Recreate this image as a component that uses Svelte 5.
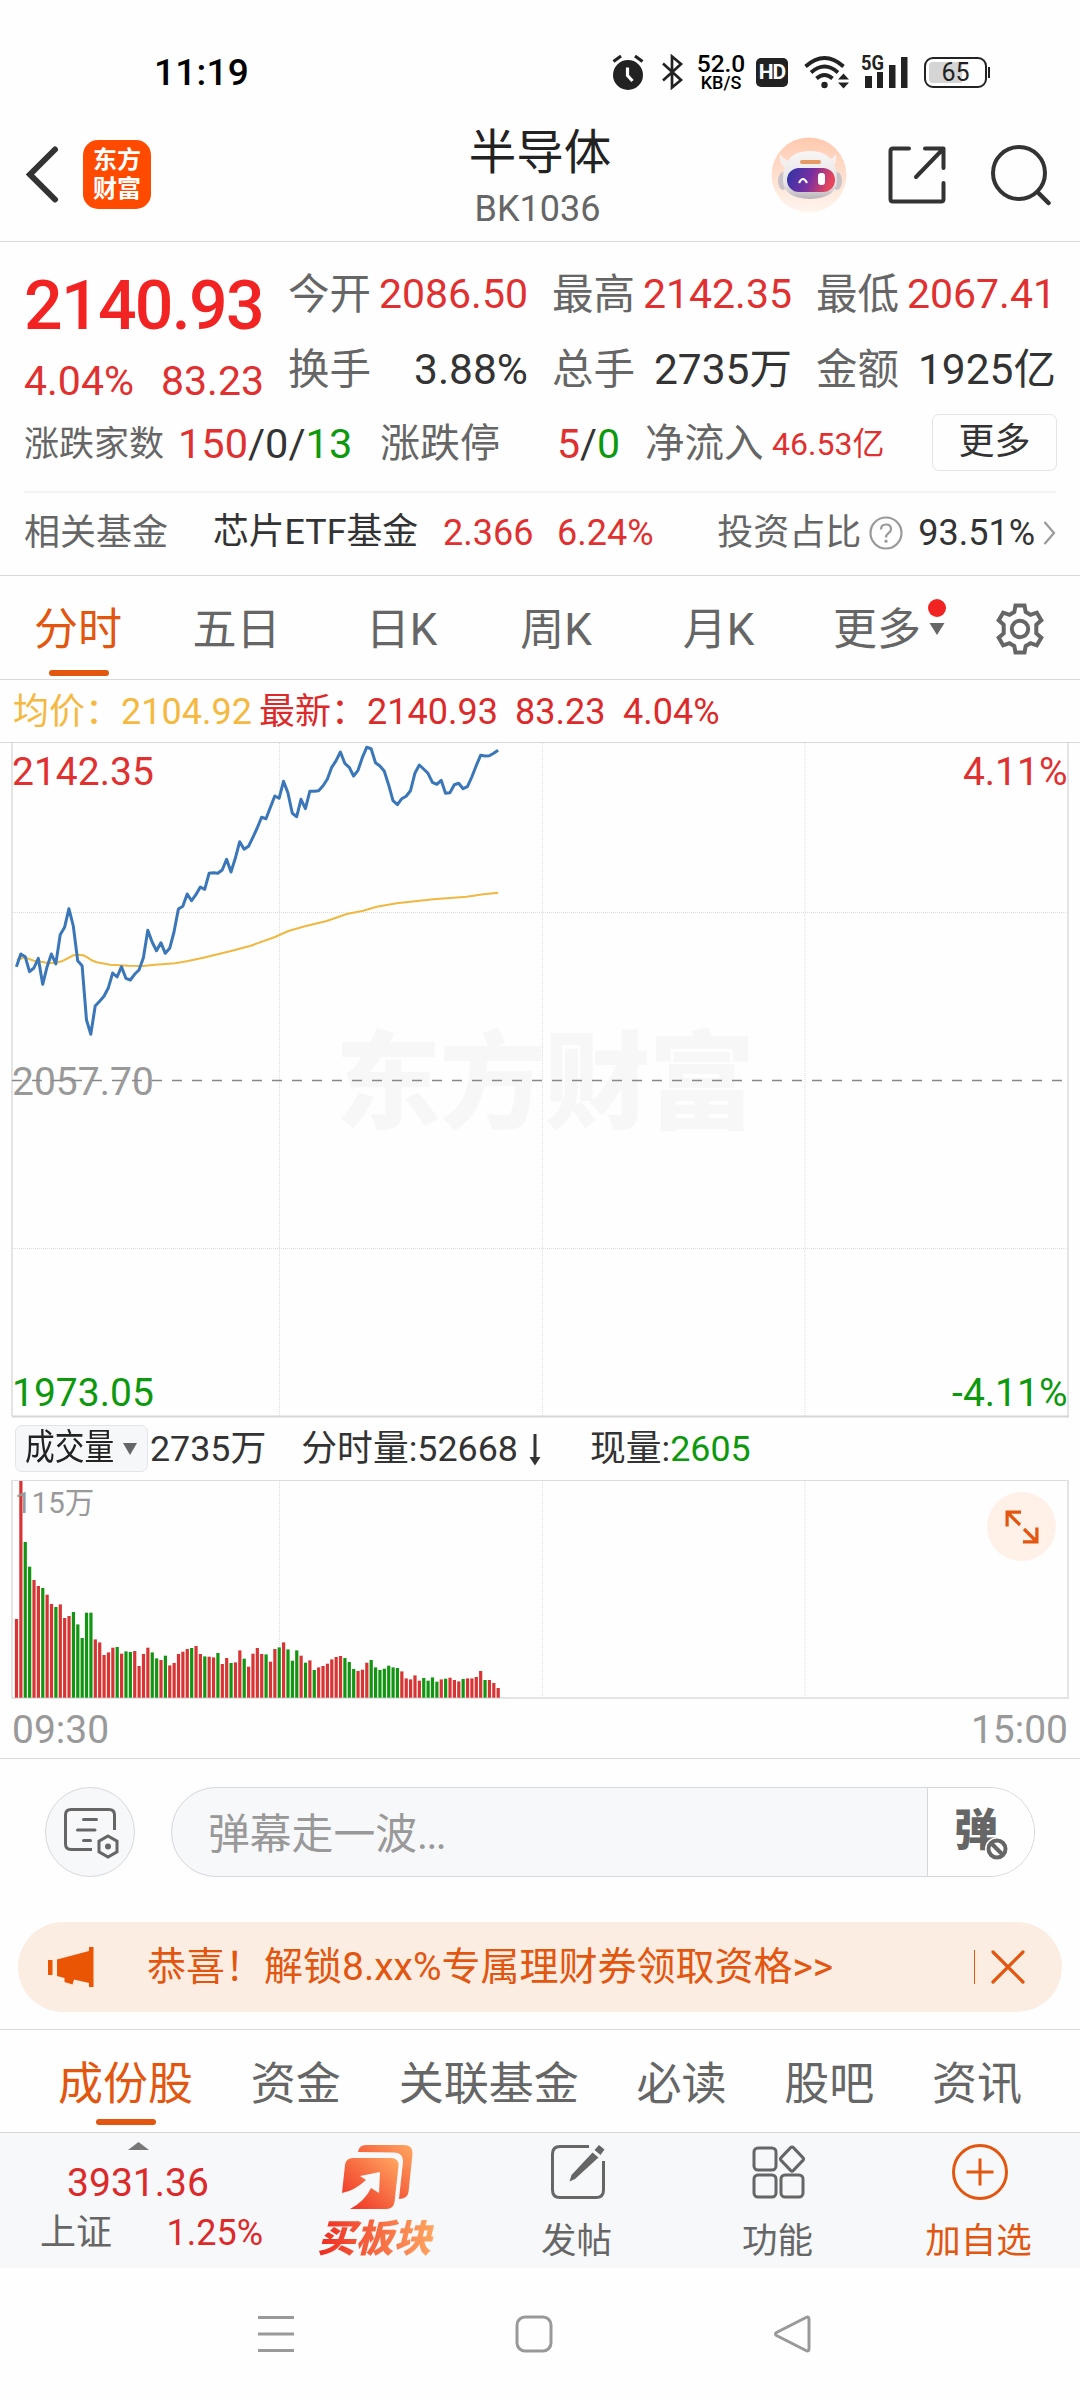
<script>
	const quotes = [
		{ label: '今开', value: '2086.50', tone: 'up' },
		{ label: '最高', value: '2142.35', tone: 'up' },
		{ label: '最低', value: '2067.41', tone: 'up' },
		{ label: '换手', value: '3.88%', tone: 'flat' },
		{ label: '总手', value: '2735万', tone: 'flat' },
		{ label: '金额', value: '1925亿', tone: 'flat' }
	];

	const periods = ['分时', '五日', '日K', '周K', '月K'];
	const sections = ['成份股', '资金', '关联基金', '必读', '股吧', '资讯'];

	let activePeriod = 0;
	let activeSection = 0;

	// one sample per minute, three units per pixel
	const step = 4.379;
	const prices = [
		710, 672, 680, 725, 714, 685, 763, 710, 672, 702, 614, 592, 536, 588, 692, 707, 870, 913, 828, 814,
		799, 773, 729, 741, 710, 745, 750, 733, 720, 683, 601, 636, 662, 638, 670, 655, 606, 537, 529, 492,
		512, 494, 471, 478, 430, 428, 430, 420, 388, 426, 385, 335, 358, 349, 322, 294, 262, 266, 232, 198,
		205, 154, 188, 250, 260, 208, 236, 184, 184, 182, 168, 148, 112, 92, 66, 100, 112, 138, 121, 83,
		52, 56, 98, 108, 123, 164, 212, 224, 206, 199, 182, 130, 105, 117, 130, 157, 163, 151, 190, 188,
		164, 160, 176, 170, 141, 107, 76, 78, 77, 70, 61
	];
	const averages = [
		[50, 690], [62, 686], [75, 682], [89, 688], [102, 692], [115, 694], [140, 698], [165, 699], [185, 694],
		[205, 684], [220, 676], [235, 674], [250, 676], [262, 682], [275, 691], [290, 697], [330, 704], [385, 707],
		[430, 708], [465, 704], [525, 700], [560, 694], [610, 683], [690, 664], [750, 648], [825, 621], [865, 603],
		[915, 589], [980, 573], [1040, 552], [1090, 542], [1130, 530], [1190, 520], [1300, 508], [1400, 500],
		[1450, 493], [1495, 488]
	];
	const priceLine = prices.map((v, i) => `${(16.4 + i * step).toFixed(1)},${(v / 3 - 12).toFixed(1)}`).join(' ');
	const averageLine = averages.map(([x, v]) => `${(x / 3).toFixed(1)},${(v / 3 - 12).toFixed(1)}`).join(' ');

	const volumes = [
		236, 650, 467, 393, 353, 335, 329, 309, 281, 272, 280, 239, 245, 257, 220, 179, 255, 255, 175, 166,
		128, 136, 150, 152, 132, 139, 137, 140, 95, 131, 150, 136, 118, 113, 126, 97, 104, 131, 138, 146,
		149, 155, 131, 124, 123, 121, 134, 101, 119, 104, 106, 142, 117, 93, 132, 149, 131, 130, 108, 146,
		151, 166, 145, 111, 142, 126, 105, 112, 83, 91, 95, 102, 115, 122, 125, 119, 107, 86, 80, 84,
		105, 113, 91, 83, 87, 96, 91, 89, 79, 58, 55, 67, 51, 59, 51, 61, 48, 55, 57, 60,
		53, 49, 56, 58, 58, 62, 80, 53, 53, 44, 29
	];
	const sides =
		'RRGGRRGRRGRRRGGGGGRRRRRGRGGRRRRGGRGRRRRRGRRGRRGRRGRRGRRRRGRRGRGGGRGRGRRRRRRGGGRRRGGGGGGGRRRRRGGGGRGRRRGRRRRGRRR';

	const columns = [279.5, 542.5, 805];
</script>

<div class="screen">
	<div class="status">
		<span class="clock">11:19</span>
		<svg class="alarm" width="32" height="36" viewBox="0 0 32 36">
			<circle cx="16" cy="21" r="15" fill="#222" />
			<path d="M1.5 7.5 9 2M30.500 7.500 23 2" stroke="#222" stroke-width="3.200" fill="none" />
			<path d="M15.500 13.500v8l5 5.500" stroke="#fff" stroke-width="3.200" fill="none" />
		</svg>
		<svg class="bluetooth" width="24" height="36" viewBox="0 0 24 36">
			<path d="M2 9.500 20 26l-9 7.500V2.500l9 7.500L2 26.500" fill="none" stroke="#222" stroke-width="2.700" />
		</svg>
		<span class="speed"><b>52.0</b><i>KB/S</i></span>
		<span class="hd">HD</span>
		<svg class="wifi" width="44" height="36" viewBox="0 0 44 36">
			<g fill="none" stroke="#222" stroke-width="3.800">
				<path d="M1.500 12.500q19-17 38 0" />
				<path d="M7 18.500q13.500-12 27 0" />
				<path d="M12.500 24.500q8-7 16 0" />
			</g>
			<circle cx="20.500" cy="31" r="3.200" fill="#222" />
			<path d="M34 25.500h11l-5.500-6zM34 28.500h11l-5.500 6z" fill="#222" />
		</svg>
		<svg class="signal" width="48" height="44" viewBox="0 -4 48 44">
			<text x="0" y="16" textLength="23" lengthAdjust="spacingAndGlyphs">5G</text>
			<path d="M4 22h7v12H4zM16 18h6v16h-6zM28 11h6.500v23H28zM40 3h6.500v31H40z" fill="#222" />
		</svg>
		<span class="battery">65</span>
	</div>

	<header>
		<div class="brand">
			<svg width="33" height="57" viewBox="0 0 33 57">
				<path d="M29 3.500 4 28.500 29 53.500" fill="none" stroke="#333" stroke-width="6" stroke-linecap="round" />
			</svg>
			<div class="logo"><span>东方</span><span>财富</span></div>
		</div>
		<div class="title">
			<h1>半导体</h1>
			<p>BK1036</p>
		</div>
		<div class="actions">
			<svg width="76" height="76" viewBox="0 0 76 76">
				<defs>
					<linearGradient id="halo" x1="0" y1="0" x2="0" y2="1">
						<stop offset="0" stop-color="#ffc9ae" />
						<stop offset="1" stop-color="#fff5ef" />
					</linearGradient>
					<linearGradient id="visor" x1="0" y1="0" x2="1" y2="0.200">
						<stop offset="0" stop-color="#2b35a8" />
						<stop offset="0.550" stop-color="#7a2fa0" />
						<stop offset="1" stop-color="#e8465a" />
					</linearGradient>
					<linearGradient id="helmet" x1="0" y1="0" x2="0" y2="1">
						<stop offset="0" stop-color="#f8f5f5" />
						<stop offset="0.700" stop-color="#e6e3e6" />
						<stop offset="1" stop-color="#b9b3b8" />
					</linearGradient>
				</defs>
				<circle cx="38" cy="38" r="37.500" fill="url(#halo)" />
				<path d="M9 17q-2 12 8 15l5-7q-8-1-13-8zM65 17q2 12-8 15l-5-7q8-1 13-8z" fill="#f6eeee" />
				<ellipse cx="12" cy="44" rx="5" ry="9" fill="#c9c3c8" />
				<ellipse cx="66" cy="44" rx="5" ry="9" fill="#c9c3c8" />
				<path d="M12 43q0-29 27-29t27 29q0 18-27 19-27-1-27-19z" fill="url(#helmet)" />
				<rect x="29" y="23" width="21" height="4" rx="2" fill="#e79a63" />
				<rect x="16" y="31" width="48" height="24" rx="12" fill="url(#visor)" />
				<path d="M28 46q4-8 8 0" fill="none" stroke="#fff" stroke-width="2.200" />
				<rect x="47" y="36" width="7" height="12" rx="3" fill="#fff" />
			</svg>
			<svg class="share" width="60" height="60" viewBox="0 0 60 60">
				<path
					d="M22 3.500H6q-2.500 0-2.500 2.500v48q0 2.500 2.500 2.500h48q2.500 0 2.500-2.500V38M38 3.500h18.500V23M56 4 29 32"
					fill="none" stroke="#333" stroke-width="4" stroke-linecap="round" stroke-linejoin="round" />
			</svg>
			<svg class="search" width="62" height="62" viewBox="0 0 62 62">
				<circle cx="29" cy="29" r="26" fill="none" stroke="#333" stroke-width="4" />
				<path d="M47.500 48 58.500 59" stroke="#333" stroke-width="4.500" stroke-linecap="round" />
			</svg>
		</div>
	</header>

	<section class="summary">
		<div class="top">
			<div class="price">
				<strong>2140.93</strong>
				<p><span>4.04%</span><span>83.23</span></p>
			</div>
			<dl>
				{#each quotes as quote}
					<div>
						<dt>{quote.label}</dt>
						<dd class={quote.tone}>{quote.value}</dd>
					</div>
				{/each}
			</dl>
		</div>
		<div class="breadth">
			<span class="label small">涨跌家数</span>
			<span class="rise"><em class="up">150</em>/0/<em class="down">13</em></span>
			<span class="label">涨跌停</span>
			<span class="limit"><em class="up">5</em>/<em class="down">0</em></span>
			<span class="label inflow">净流入</span>
			<span class="up amount">46.53亿</span>
			<button>更多</button>
		</div>
		<div class="fund">
			<span class="label">相关基金</span>
			<span class="name">芯片ETF基金</span>
			<span class="up nav">2.366</span>
			<span class="up">6.24%</span>
			<span class="label share-of">投资占比</span>
			<svg width="34" height="34" viewBox="0 0 34 34">
				<circle cx="17" cy="17" r="15.500" fill="none" stroke="#999" stroke-width="2.200" />
				<path d="M12 13.500q0-5 5-5t5 4.500q0 2.500-2.500 4.200Q17 19 17 21.500" fill="none" stroke="#999" stroke-width="2.200" />
				<circle cx="17" cy="25.200" r="1.600" fill="#999" />
			</svg>
			<span class="ratio">93.51%</span>
			<svg class="arrow" width="13" height="26" viewBox="0 0 13 26">
				<path d="m1.500 2 9.500 11-9.500 11" fill="none" stroke="#999" stroke-width="2.200" />
			</svg>
		</div>
	</section>

	<nav class="periods">
		{#each periods as period, i}
			<a href="#{i}" class:active={i === activePeriod} on:click|preventDefault={() => (activePeriod = i)}>{period}</a>
		{/each}
		<span class="more">更多
			<svg width="20" height="40" viewBox="0 0 20 40">
				<circle cx="10" cy="10" r="9" fill="#f22323" />
				<path d="M2.500 25h15L10 37z" fill="#666" />
			</svg>
		</span>
		<svg class="gear" width="54" height="54" viewBox="0 0 54 54" fill="none" stroke="#666" stroke-width="4">
			<path
				d="M22.500 3.500h9l1.200 6.500 4.800 2.800 6.300-2.200 4.500 7.800-5 4.200v8.800l5 4.200-4.500 7.800-6.300-2.200-4.800 2.800-1.200 6.500h-9l-1.200-6.500-4.800-2.800-6.300 2.200-4.500-7.800 5-4.200v-8.800l-5-4.200 4.500-7.800 6.300 2.200 4.800-2.800z" />
			<circle cx="27" cy="27" r="8.200" />
		</svg>
	</nav>

	<div class="latest">
		<span class="avg">均价：2104.92</span>
		<span class="now">最新：2140.93</span>
		<span>83.23</span>
		<span>4.04%</span>
	</div>

	<svg class="chart" width="1080" height="676" viewBox="0 0 1080 676">
		<text class="watermark" x="335" y="378" textLength="420">东方财富</text>
		<g class="grid">
			{#each columns as x}
				<path d="M{x} 1V674" />
			{/each}
			<path d="M13 170.500H1067M13 506.500H1067" />
		</g>
		<path d="M0 .5H1080" stroke="#d9d9d9" />
		<path d="M12 1V674M1068 1V674" stroke="#e4e4e4" stroke-width="2" />
		<path d="M12 674.500H1069" stroke="#d6d6d6" stroke-width="2" />
		<text x="12" y="43" class="up">2142.35</text>
		<text x="1067.500" y="43" class="up end">4.11%</text>
		<text x="12" y="353" class="mid">2057.70</text>
		<text x="12" y="664" class="down">1973.05</text>
		<text x="1067.500" y="664" class="down end">-4.11%</text>
		<path d="M12 338.500H1067" stroke="#888" stroke-width="1.700" stroke-dasharray="10 10" />
		<polyline points={averageLine} fill="none" stroke="#f0b840" stroke-width="2" />
		<polyline points={priceLine} fill="none" stroke="#3a76b8" stroke-width="3" stroke-linejoin="round" />
	</svg>

	<div class="volume-bar">
		<button><span>成交量</span><i></i></button>
		<span>2735万</span>
		<span class="minute">分时量:52668</span>
		<svg width="12" height="32" viewBox="0 0 12 32">
			<path d="M6 0v28" stroke="#333" stroke-width="3" />
			<path d="M.5 23h11L6 31.500z" fill="#333" />
		</svg>
		<span class="current">现量:<em class="down">2605</em></span>
	</div>

	<div class="volume">
		<svg class="chart" width="1080" height="220" viewBox="0 0 1080 220">
			<g class="grid">
				{#each columns as x}
					<path d="M{x} 1V217" />
				{/each}
			</g>
			<path d="M12 .5H1069" stroke="#ddd" />
			<path d="M12 0V219M1068 0V219M11 218H1069" stroke="#e4e4e4" stroke-width="2" />
			{#each volumes as v, i}
				<rect
					x={(14.9 + i * step).toFixed(2)} y={(217.700 - v / 3).toFixed(1)}
					width="3.200" height={(v / 3).toFixed(1)}
					fill={sides[i] === 'R' ? '#d93434' : '#129612'} />
			{/each}
			<text x="15" y="33" class="scale">115万</text>
		</svg>
		<button aria-label="全屏">
			<svg width="36" height="36" viewBox="0 0 36 36" fill="none" stroke="#e2560f" stroke-width="3.200">
				<path d="M17 3.100H3.100V17.500M3.500 3.500 16 16M19 32.900H32.900V18.500M32.500 32.500 20 20" />
			</svg>
		</button>
	</div>
	<div class="hours"><span>09:30</span><span>15:00</span></div>

	<div class="comment">
		<button class="settings" aria-label="弹幕设置">
			<svg width="56" height="52" viewBox="0 0 56 52" fill="none" stroke="#666" stroke-width="3">
				<path d="M29 42.500H8q-5.500 0-5.500-5.500V8q0-5.500 5.500-5.500h38q5.500 0 5.500 5.500v15" />
				<path d="M20.500 12.500h13M14.500 23h17.500M20.500 33.500h7" stroke-linecap="round" />
				<path d="m45 29 9 5.200v10.600L45 50l-9-5.200V34.200z" />
				<circle cx="45" cy="39.500" r="3" fill="#666" stroke="none" />
			</svg>
		</button>
		<div class="field">
			<span class="placeholder">弹幕走一波<i>...</i></span>
			<span class="toggle">弹
				<svg width="24" height="24" viewBox="0 0 24 24">
					<circle cx="12" cy="12" r="12" fill="#fff" />
					<circle cx="12" cy="12" r="8.500" fill="none" stroke="#666" stroke-width="4" />
					<path d="m6 6 12 12" stroke="#666" stroke-width="4" />
				</svg>
			</span>
		</div>
	</div>

	<div class="banner">
		<svg width="46" height="41" viewBox="0 0 46 41" fill="#ea5504">
			<path d="M0 13h4.500v15H0zM9 12.500 41 4V0h4.500v40H41v-4l-15-3.500-1.500 5-8-2.500V31L9 29z" />
		</svg>
		<span>恭喜！解锁8.xx%专属理财券领取资格&gt;&gt;</span>
		<svg class="close" width="34" height="34" viewBox="0 0 34 34" stroke="#e2560f" stroke-width="3.200" stroke-linecap="round">
			<path d="m2 2 30 30M32 2 2 32" />
		</svg>
	</div>

	<nav class="sections">
		{#each sections as section, i}
			<a href="#s{i}" class:active={i === activeSection} on:click|preventDefault={() => (activeSection = i)}>{section}</a>
		{/each}
	</nav>

	<footer>
		<div class="index">
			<svg width="21" height="8" viewBox="0 0 21 8"><path d="M0 8 10.500 0 21 8z" fill="#777" /></svg>
			<strong>3931.36</strong>
			<p><span>上证</span><em>1.25%</em></p>
		</div>
		<div class="item buy">
			<svg width="72" height="66" viewBox="0 0 72 66">
				<defs>
					<linearGradient id="flame" x1="0" y1="1" x2="1" y2="0">
						<stop offset="0" stop-color="#ee2a20" />
						<stop offset="1" stop-color="#ffa861" />
					</linearGradient>
				</defs>
				<path d="M17 8q1-7 8-7h38q9 0 8.500 9l-4 38q-1 7-9.500 7l4-37q.500-9-8.500-9.500z" fill="url(#flame)" />
				<path d="M4 21q1-7 8-7h38q8 0 7.500 8l-4 36q-1 7-8 7H9q15-8 21-21l8 5 1-21-20 4 6 4Q13 47 1 49z" fill="url(#flame)" />
			</svg>
			<span>买板块</span>
		</div>
		<div class="item">
			<svg width="56" height="56" viewBox="0 0 56 56">
				<path d="M39 2.500H10Q2.500 2.500 2.500 10v36q0 7.500 7.500 7.500h36q7.500 0 7.500-7.500V17" fill="none" stroke="#666" stroke-width="3" />
				<path d="m49 1 5.500 4.500-4 5.500-6-5zM42.500 8.500l6 5L25 35l-5.500 2.500L21.500 31z" fill="#666" />
			</svg>
			<span>发帖</span>
		</div>
		<div class="item">
			<svg width="56" height="56" viewBox="0 0 56 56" fill="none" stroke="#666" stroke-width="3">
				<rect x="3" y="4" width="22" height="22" rx="4" />
				<rect x="3" y="31" width="22" height="22" rx="4" />
				<rect x="30" y="31" width="22" height="22" rx="4" />
				<path d="M39.600 3.600q1.400-1.400 2.800 0l9.500 10q1.400 1.400 0 2.800l-9.500 10q-1.400 1.400-2.800 0l-9.500-10q-1.400-1.400 0-2.800z" />
			</svg>
			<span>功能</span>
		</div>
		<div class="item add">
			<svg width="56" height="56" viewBox="0 0 56 56" fill="none" stroke="#e2560f" stroke-width="3">
				<circle cx="28" cy="28" r="26.500" />
				<path d="M14.500 28h27M28 14.500v27" />
			</svg>
			<span>加自选</span>
		</div>
	</footer>

	<div class="system">
		<svg width="38" height="38" viewBox="0 0 38 38"><path d="M1 2.500h36M1 19h36M1 35.500h36" /></svg>
		<svg width="38" height="38" viewBox="0 0 38 38"><rect x="2" y="2" width="34" height="34" rx="8" /></svg>
		<svg width="38" height="38" viewBox="0 0 38 38"><path d="M33 2.500q3-1.500 3 2v29q0 3.500-3 2L3.500 20.500q-2-1.500 0-3z" /></svg>
	</div>
</div>

<style>
	:global(body) {
		background: #fefefe;
	}

	.screen {
		width: 1080px;
		height: 2400px;
		overflow: hidden;
		background: #fefefe;
		color: #333;
		font-family: Roboto, "Noto Sans CJK SC", sans-serif;
		font-size: 36px;
		line-height: 1;
	}

	.screen * {
		box-sizing: border-box;
	}

	svg {
		display: block;
		flex: none;
	}

	span {
		white-space: nowrap;
	}

	em,
	i,
	b {
		font-style: normal;
		font-weight: inherit;
	}

	h1,
	p,
	dl,
	dd {
		margin: 0;
	}

	button {
		padding: 0;
		font: inherit;
		color: inherit;
	}

	.up {
		color: #e03030;
		fill: #e03030;
	}

	.down {
		color: #0d990d;
		fill: #0d990d;
	}

	.label {
		color: #666;
	}

	/* status bar */
	.status {
		display: flex;
		align-items: center;
		height: 124px;
		padding: 20px 0 0 154px;
		color: #000;
	}

	.clock {
		width: 458px;
		font-size: 37px;
		font-weight: 500;
		letter-spacing: 0.200px;
	}

	.bluetooth {
		margin-left: 17px;
	}

	.speed {
		display: flex;
		flex-direction: column;
		align-items: center;
		width: 52px;
		margin-left: 10px;
		font-weight: 500;
	}

	.speed b {
		font-size: 24.500px;
		line-height: 21px;
	}

	.speed i {
		font-size: 18px;
		line-height: 18px;
	}

	.hd {
		width: 32px;
		height: 29px;
		margin-left: 9px;
		border-radius: 5px;
		background: #222;
		color: #fff;
		font-size: 21px;
		font-weight: 700;
		line-height: 29px;
		text-align: center;
		letter-spacing: -1px;
	}

	.wifi {
		margin-left: 16px;
		overflow: visible;
	}

	.signal {
		margin-left: 13px;
		overflow: visible;
	}

	.signal text {
		fill: #222;
		font-size: 21px;
		font-weight: 700;
	}

	.battery {
		position: relative;
		width: 63px;
		height: 31px;
		margin-left: 15px;
		border: 2px solid #222;
		border-radius: 9px;
		background: linear-gradient(90deg, #d5d5d5 62%, transparent 62%) content-box;
		padding: 3px;
		color: #222;
		font-size: 25px;
		line-height: 22px;
		text-align: center;
	}

	.battery::after {
		content: "";
		position: absolute;
		right: -5px;
		top: 8px;
		width: 2px;
		height: 11px;
		background: #222;
	}

	/* title bar */
	header {
		display: grid;
		grid-template-columns: 1fr auto 1fr;
		height: 118px;
		border-bottom: 1px solid #d9d9d9;
	}

	.brand,
	.actions {
		display: flex;
		align-items: center;
		height: 101px;
	}

	.brand {
		padding-left: 26px;
		gap: 24px;
	}

	.logo {
		display: flex;
		flex-direction: column;
		justify-content: center;
		width: 68px;
		height: 69px;
		border-radius: 15px;
		background: #ff4a00;
		color: #fff;
		font-size: 24px;
		font-weight: 700;
		line-height: 29px;
		text-align: center;
	}

	.title {
		text-align: center;
	}

	h1 {
		color: #222;
		font-size: 47.500px;
		font-weight: 400;
		line-height: 58px;
	}

	.title p {
		color: #666;
		font-size: 36px;
		line-height: 54px;
		margin-left: -5px;
	}

	.actions {
		justify-content: flex-end;
		padding-right: 28px;
	}

	.share {
		margin-left: 40px;
	}

	.search {
		margin-left: 43px;
	}

	/* quote summary */
	.summary {
		height: 334px;
		padding: 15px 24px 0;
		border-bottom: 1px solid #d9d9d9;
		font-size: 41px;
	}

	.top {
		display: flex;
		height: 150px;
	}

	.price {
		width: 264px;
		color: #e03030;
	}

	.price strong {
		display: block;
		color: #f22323;
		font-size: 68px;
		font-weight: 500;
		line-height: 98px;
		letter-spacing: -1.700px;
	}

	.price p {
		display: flex;
		justify-content: space-between;
		width: 240px;
		line-height: 53px;
	}

	dl {
		display: grid;
		grid-template-columns: repeat(3, 240px);
		column-gap: 24px;
		line-height: 75px;
	}

	dl div {
		display: flex;
		justify-content: space-between;
	}

	dt {
		color: #666;
		font-size: 41.500px;
	}

	.flat {
		font-size: 42.500px;
	}

	.breadth,
	.fund {
		display: flex;
		align-items: center;
	}

	.breadth {
		height: 74px;
	}

	.breadth .label {
		width: 177px;
		font-size: 40px;
	}

	.breadth .small {
		width: 154px;
		font-size: 35px;
	}

	.rise {
		width: 202px;
		font-size: 41.500px;
	}

	.limit {
		width: 88px;
	}

	.breadth .inflow {
		width: 127px;
		font-size: 39.500px;
	}

	.amount {
		font-size: 32px;
	}

	.breadth button {
		width: 125px;
		height: 57px;
		margin: -4px -1px 0 auto;
		border: 1.500px solid #e4e4e4;
		border-radius: 7px;
		background: none;
		font-size: 36px;
	}

	.fund {
		height: 84px;
		margin-top: 10px;
		padding-bottom: 2px;
		border-top: 2px solid #f3f3f3;
		font-size: 36px;
	}

	.name {
		margin-left: 45px;
		width: 230px;
		font-size: 35.800px;
	}

	.nav {
		width: 114px;
	}

	.share-of {
		margin: 0 8px 0 auto;
	}

	.ratio {
		margin: 0 8px 0 15px;
	}

	/* period tabs */
	.periods {
		display: grid;
		grid-template-columns: 156px 161px 169px 140px 185px 182px 54px;
		align-items: center;
		height: 104px;
		border-bottom: 1px solid #d9d9d9;
		color: #666;
		font-size: 44px;
	}

	nav a {
		position: relative;
		height: 100%;
		color: inherit;
		text-align: center;
		text-decoration: none;
	}

	.periods a {
		line-height: 109px;
	}

	nav .active {
		color: #e2560f;
	}

	nav .active::after {
		content: "";
		position: absolute;
		left: calc(50% - 30px);
		bottom: 7px;
		width: 60px;
		height: 6px;
		border-radius: 4px;
		background: #e2560f;
	}

	.periods .active::after {
		left: 49px;
		bottom: 9px;
	}

	.more {
		display: flex;
		padding-left: 22px;
		line-height: 109px;
		gap: 6px;
	}

	.more svg {
		margin-top: 22px;
	}

	.gear {
		margin-top: -4px;
	}

	.latest {
		display: flex;
		height: 62px;
		padding-left: 13px;
		color: #dc2a2a;
		line-height: 64px;
	}

	.latest .avg {
		width: 246px;
		color: #f5b840;
	}

	.latest .now {
		width: 256px;
	}

	.latest span + span + span {
		width: 108px;
	}

	/* charts */
	.chart text {
		font-size: 39px;
	}

	.grid {
		fill: none;
		stroke: #dcdcdc;
		stroke-dasharray: 1 1;
	}

	.chart .end {
		text-anchor: end;
	}

	.chart .mid {
		fill: #999;
	}

	.chart .scale {
		fill: #999;
		font-size: 29.500px;
	}

	.chart .watermark {
		fill: #f7f7f7;
		font-size: 106px;
		font-weight: 900;
	}

	.volume-bar {
		display: flex;
		align-items: center;
		height: 62px;
		padding: 1px 0 0 15px;
		font-size: 35.800px;
	}

	.volume-bar button {
		display: flex;
		align-items: center;
		width: 133px;
		height: 47px;
		margin: -2px 2px 0 0;
		padding-left: 9px;
		border: 1px solid #e2e4e8;
		border-radius: 7px;
		background: #f6f7f9;
	}

	.volume-bar button span {
		width: 98px;
		transform: scaleX(0.830);
		transform-origin: left;
		color: #222;
	}

	.volume-bar button i {
		border: 7.500px solid transparent;
		border-top: 12px solid #666;
		border-bottom: 0;
	}

	.minute {
		margin: 0 11px 0 35px;
	}

	.current {
		margin-left: 49px;
	}

	.volume {
		position: relative;
		height: 220px;
	}

	.volume button {
		position: absolute;
		top: 12px;
		right: 24px;
		display: grid;
		place-items: center;
		width: 69px;
		height: 69px;
		border: 0;
		border-radius: 50%;
		background: #fff0e8;
	}

	.hours {
		display: flex;
		justify-content: space-between;
		height: 59px;
		padding: 0 12px;
		border-bottom: 1px solid #d9d9d9;
		color: #999;
		font-size: 39px;
		line-height: 60px;
	}

	/* bullet comments */
	.comment {
		display: flex;
		gap: 36px;
		padding: 28px 45px 45px;
	}

	.settings {
		display: grid;
		place-items: center;
		width: 90px;
		height: 90px;
		padding: 2px 0 0 2px;
		border: 1.500px solid #d6d8dd;
		border-radius: 50%;
		background: #f7f8fa;
	}

	.field {
		display: flex;
		flex: 1;
		height: 90px;
		overflow: hidden;
		border: 1px solid #d3d6da;
		border-radius: 45px;
		background: #f7f8fa;
		line-height: 93px;
	}

	.placeholder {
		flex: 1;
		padding-left: 36px;
		color: #999;
		font-size: 41.800px;
	}

	.placeholder i {
		letter-spacing: -1.600px;
	}

	.toggle {
		position: relative;
		width: 107px;
		padding-left: 26px;
		border-left: 1px solid #d3d6da;
		background: #fefefe;
		color: #666;
		font-size: 44px;
		font-weight: 900;
		line-height: 86px;
	}

	.toggle svg {
		position: absolute;
		left: 57px;
		top: 49px;
	}

	.banner {
		display: flex;
		align-items: center;
		height: 90px;
		margin: 0 18px 17px;
		padding: 0 37px 0 30px;
		border-radius: 45px;
		background: #fcede3;
		color: #e2560f;
		font-size: 39px;
	}

	.banner span {
		flex: 1;
		margin-left: 53px;
	}

	.close {
		box-sizing: content-box !important;
		padding-left: 16px;
		border-left: 1px solid #e2560f;
	}

	.sections {
		display: flex;
		gap: 57.800px;
		height: 104px;
		padding-left: 58px;
		border-top: 1px solid #d9d9d9;
		border-bottom: 1px solid #d5d7da;
		color: #666;
		font-size: 45px;
		line-height: 109px;
	}

	/* bottom toolbar */
	footer {
		display: flex;
		height: 135px;
		background: #f7f8fa;
	}

	.index {
		display: flex;
		flex-direction: column;
		align-items: center;
		width: 276px;
		padding-top: 9px;
		color: #dc2a2a;
	}

	.index strong {
		margin-top: 13px;
		font-size: 39px;
		font-weight: 400;
		line-height: 40px;
	}

	.index p {
		display: flex;
		justify-content: space-between;
		width: 100%;
		margin-top: 10px;
		padding: 0 13px 0 40px;
		line-height: 40px;
	}

	.index p span {
		color: #666;
	}

	.item {
		display: flex;
		flex-direction: column;
		align-items: center;
		width: 201px;
		padding-top: 11px;
		color: #666;
	}

	.item span {
		margin-top: 21px;
		padding-right: 2px;
		line-height: 40px;
		font-size: 35.500px;
	}

	.item svg {
		height: 56px;
	}

	.buy svg {
		height: 66px;
	}

	.item.buy span {
		margin-top: 9px;
		padding-right: 4px;
		font-size: 38px;
		font-weight: 900;
		font-style: italic;
		background: linear-gradient(90deg, #ee2a20, #ffa861);
		-webkit-background-clip: text;
		background-clip: text;
		color: transparent;
	}

	.add {
		color: #e2560f;
	}

	.system {
		display: flex;
		justify-content: center;
		align-items: center;
		gap: 220px;
		height: 132px;
		padding-right: 12px;
		fill: none;
		stroke: #999;
		stroke-width: 3;
	}
</style>
